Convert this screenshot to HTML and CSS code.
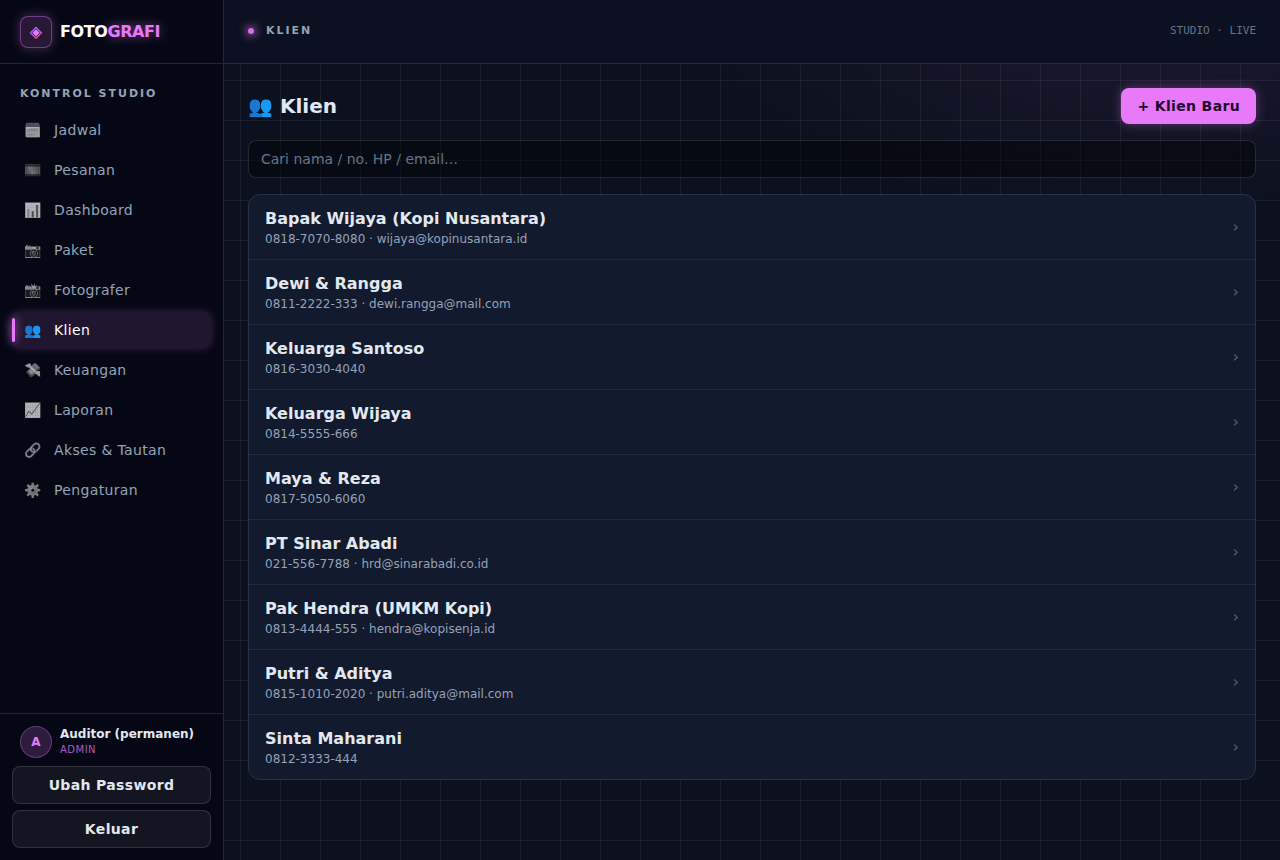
FILE: index.html
```
<!DOCTYPE html>
<html lang="id">
<head>
    <meta charset="UTF-8">
    <meta name="viewport" content="width=device-width, initial-scale=1.0">
    <title>Klien - Fotografi</title>
    <link rel="stylesheet" href="styles.css">
</head>
<body>
    <div class="app">
        <aside class="sidebar">
            <a class="brand" href="#">
                <span class="brand-mark">◈</span>
                <span class="brand-name">FOTO<span class="brand-accent">GRAFI</span></span>
            </a>
            <nav class="nav">
                <div class="nav-title">KONTROL STUDIO</div>
                <a class="nav-link" href="#"><span class="nav-icon">🗓️</span>Jadwal</a>
                <a class="nav-link" href="#"><span class="nav-icon">🎞️</span>Pesanan</a>
                <a class="nav-link" href="#"><span class="nav-icon">📊</span>Dashboard</a>
                <a class="nav-link" href="#"><span class="nav-icon">📷</span>Paket</a>
                <a class="nav-link" href="#"><span class="nav-icon">📸</span>Fotografer</a>
                <a class="nav-link active" href="#" aria-current="page"><span class="nav-icon">👥</span>Klien</a>
                <a class="nav-link" href="#"><span class="nav-icon">💸</span>Keuangan</a>
                <a class="nav-link" href="#"><span class="nav-icon">📈</span>Laporan</a>
                <a class="nav-link" href="#"><span class="nav-icon">🔗</span>Akses &amp; Tautan</a>
                <a class="nav-link" href="#"><span class="nav-icon">⚙️</span>Pengaturan</a>
            </nav>
            <div class="account">
                <div class="user">
                    <span class="avatar">A</span>
                    <div>
                        <div class="user-name">Auditor (permanen)</div>
                        <div class="user-role">ADMIN</div>
                    </div>
                </div>
                <button class="btn btn-ghost" type="button">Ubah Password</button>
                <button class="btn btn-ghost" type="button">Keluar</button>
            </div>
        </aside>

        <div class="main">
            <header class="topbar">
                <div class="crumb"><span class="dot"></span>KLIEN</div>
                <div class="status">STUDIO · LIVE</div>
            </header>
            <main class="content">
                <div class="page-head">
                    <h1>👥 Klien</h1>
                    <button class="btn btn-primary" type="button">+ Klien Baru</button>
                </div>
                <input class="search" type="search" aria-label="Cari klien" placeholder="Cari nama / no. HP / email…">
                <div class="client-list">
                    <a class="client" href="#">
                        <div>
                            <div class="client-name">Bapak Wijaya (Kopi Nusantara)</div>
                            <div class="client-contact">0818-7070-8080 · wijaya@kopinusantara.id</div>
                        </div>
                        <span class="chevron">›</span>
                    </a>
                    <a class="client" href="#">
                        <div>
                            <div class="client-name">Dewi &amp; Rangga</div>
                            <div class="client-contact">0811-2222-333 · dewi.rangga@mail.com</div>
                        </div>
                        <span class="chevron">›</span>
                    </a>
                    <a class="client" href="#">
                        <div>
                            <div class="client-name">Keluarga Santoso</div>
                            <div class="client-contact">0816-3030-4040</div>
                        </div>
                        <span class="chevron">›</span>
                    </a>
                    <a class="client" href="#">
                        <div>
                            <div class="client-name">Keluarga Wijaya</div>
                            <div class="client-contact">0814-5555-666</div>
                        </div>
                        <span class="chevron">›</span>
                    </a>
                    <a class="client" href="#">
                        <div>
                            <div class="client-name">Maya &amp; Reza</div>
                            <div class="client-contact">0817-5050-6060</div>
                        </div>
                        <span class="chevron">›</span>
                    </a>
                    <a class="client" href="#">
                        <div>
                            <div class="client-name">PT Sinar Abadi</div>
                            <div class="client-contact">021-556-7788 · hrd@sinarabadi.co.id</div>
                        </div>
                        <span class="chevron">›</span>
                    </a>
                    <a class="client" href="#">
                        <div>
                            <div class="client-name">Pak Hendra (UMKM Kopi)</div>
                            <div class="client-contact">0813-4444-555 · hendra@kopisenja.id</div>
                        </div>
                        <span class="chevron">›</span>
                    </a>
                    <a class="client" href="#">
                        <div>
                            <div class="client-name">Putri &amp; Aditya</div>
                            <div class="client-contact">0815-1010-2020 · putri.aditya@mail.com</div>
                        </div>
                        <span class="chevron">›</span>
                    </a>
                    <a class="client" href="#">
                        <div>
                            <div class="client-name">Sinta Maharani</div>
                            <div class="client-contact">0812-3333-444</div>
                        </div>
                        <span class="chevron">›</span>
                    </a>
                </div>
            </main>
        </div>
    </div>
</body>
</html>
```
FILE: styles.css
```
:root {
    --accent: #e879f9;
    --line: rgba(255, 255, 255, 0.12);
    --text: #e2e8f0;
    --muted: #94a3b8;
    --dim: #64748b;
}

* {
    box-sizing: border-box;
}

body {
    margin: 0;
    color: var(--text);
    font-family: "DejaVu Sans", sans-serif;
    font-size: 14px;
    line-height: 20px;
    background-color: #0b111e;
    background-image:
        linear-gradient(rgba(255, 255, 255, 0.06) 1px, transparent 1px),
        linear-gradient(90deg, rgba(255, 255, 255, 0.06) 1px, transparent 1px),
        radial-gradient(ellipse 480px 220px at 90% 0, rgba(232, 121, 249, 0.08), transparent);
    background-size: 40px 40px, 40px 40px, 100% 100%;
    background-attachment: fixed;
}

a {
    color: inherit;
    text-decoration: none;
}

.app {
    display: flex;
    min-height: 100vh;
}

/* Sidebar */
.sidebar {
    display: flex;
    flex-direction: column;
    flex: none;
    width: 224px;
    height: 100vh;
    position: sticky;
    top: 0;
    background: #050814;
    border-right: 1px solid var(--line);
}

.brand {
    display: flex;
    align-items: center;
    gap: 8px;
    height: 64px;
    padding: 0 20px;
    border-bottom: 1px solid var(--line);
}

.brand-mark {
    display: grid;
    place-items: center;
    width: 32px;
    height: 32px;
    border: 1px solid rgba(232, 121, 249, 0.4);
    border-radius: 8px;
    background: rgba(232, 121, 249, 0.15);
    color: var(--accent);
    font-size: 16px;
    box-shadow: 0 0 12px rgba(232, 121, 249, 0.3);
}

.brand-name {
    color: #fff;
    font-size: 16px;
    font-weight: bold;
    letter-spacing: -0.025em;
}

.brand-accent {
    color: var(--accent);
    text-shadow: 0 0 12px rgba(232, 121, 249, 0.6);
}

.nav {
    display: flex;
    flex-direction: column;
    flex: 1;
    gap: 4px;
    padding: 20px 12px;
    overflow-y: auto;
}

.nav-title {
    padding: 0 8px 4px;
    color: var(--muted);
    font-size: 11px;
    font-weight: bold;
    letter-spacing: 0.18em;
}

.nav-link {
    display: flex;
    align-items: center;
    gap: 12px;
    position: relative;
    padding: 8px 12px;
    border-radius: 8px;
    color: var(--muted);
    letter-spacing: 0.025em;
}

.nav-icon {
    width: 18px;
    filter: grayscale(1);
    opacity: 0.7;
    letter-spacing: 0;
}

.nav-link.active {
    color: #fff;
    background: rgba(232, 121, 249, 0.12);
    box-shadow: 0 0 8px rgba(232, 121, 249, 0.25);
}

.nav-link.active .nav-icon {
    filter: none;
    opacity: 1;
}

.nav-link.active::before {
    content: "";
    position: absolute;
    left: 0;
    top: 6px;
    bottom: 6px;
    width: 3px;
    border-radius: 2px;
    background: var(--accent);
    box-shadow: 0 0 10px var(--accent);
}

.account {
    display: flex;
    flex-direction: column;
    gap: 6px;
    padding: 12px;
    border-top: 1px solid var(--line);
}

.user {
    display: flex;
    align-items: center;
    gap: 8px;
    padding: 0 8px 2px;
}

.avatar {
    display: grid;
    place-items: center;
    width: 32px;
    height: 32px;
    border: 1px solid rgba(232, 121, 249, 0.3);
    border-radius: 50%;
    background: rgba(232, 121, 249, 0.18);
    color: var(--accent);
    font-size: 12px;
    font-weight: bold;
}

.user-name {
    font-size: 12px;
    font-weight: bold;
    line-height: 16px;
}

.user-role {
    color: rgba(232, 121, 249, 0.75);
    font-size: 10px;
    letter-spacing: 0.05em;
    line-height: 16px;
}

/* Buttons */
.btn {
    padding: 8px 16px;
    border: 1px solid transparent;
    border-radius: 8px;
    font-family: inherit;
    font-size: 14px;
    font-weight: bold;
    letter-spacing: 0.025em;
    line-height: 20px;
    cursor: pointer;
}

.btn-ghost {
    border-color: var(--line);
    background: rgba(255, 255, 255, 0.06);
    color: var(--text);
}

.btn-primary {
    border: none;
    background: var(--accent);
    color: #1f0a2e;
    box-shadow: 0 0 12px rgba(232, 121, 249, 0.35);
}

/* Main column */
.main {
    flex: 1;
    min-width: 0;
}

.topbar {
    display: flex;
    align-items: center;
    justify-content: space-between;
    height: 64px;
    padding: 0 24px 2px;
    border-bottom: 1px solid var(--line);
    background: #0b1120;
}

.crumb {
    display: flex;
    align-items: center;
    gap: 12px;
    color: var(--muted);
    font-size: 11px;
    font-weight: bold;
    letter-spacing: 0.18em;
}

.dot {
    width: 6px;
    height: 6px;
    border-radius: 50%;
    background: #d76ce8;
    box-shadow: 0 0 10px 1px var(--accent);
}

.status {
    color: var(--dim);
    font-family: "DejaVu Sans Mono", monospace;
    font-size: 11px;
}

.content {
    display: flex;
    flex-direction: column;
    gap: 16px;
    padding: 24px;
}

.page-head {
    display: flex;
    align-items: center;
    justify-content: space-between;
}

h1 {
    margin: 0;
    font-size: 20px;
    line-height: 28px;
}

.search {
    width: 100%;
    padding: 8px 12px;
    border: 1px solid var(--line);
    border-radius: 8px;
    background: rgba(0, 0, 0, 0.4);
    color: var(--text);
    font-family: inherit;
    font-size: 14px;
    line-height: 20px;
}

.search::placeholder {
    color: var(--dim);
}

.client-list {
    border: 1px solid #283246;
    border-radius: 12px;
    background: #121a2e;
    overflow: hidden;
}

.client {
    display: flex;
    align-items: center;
    justify-content: space-between;
    padding: 12px 16px;
    border-bottom: 1px solid #212b3f;
}

.client:last-child {
    border-bottom: none;
}

.client-name {
    font-size: 16px;
    font-weight: bold;
    line-height: 24px;
}

.client-contact {
    color: var(--muted);
    font-size: 12px;
    line-height: 16px;
}

.chevron {
    color: #526075;
    font-size: 16px;
}
```
